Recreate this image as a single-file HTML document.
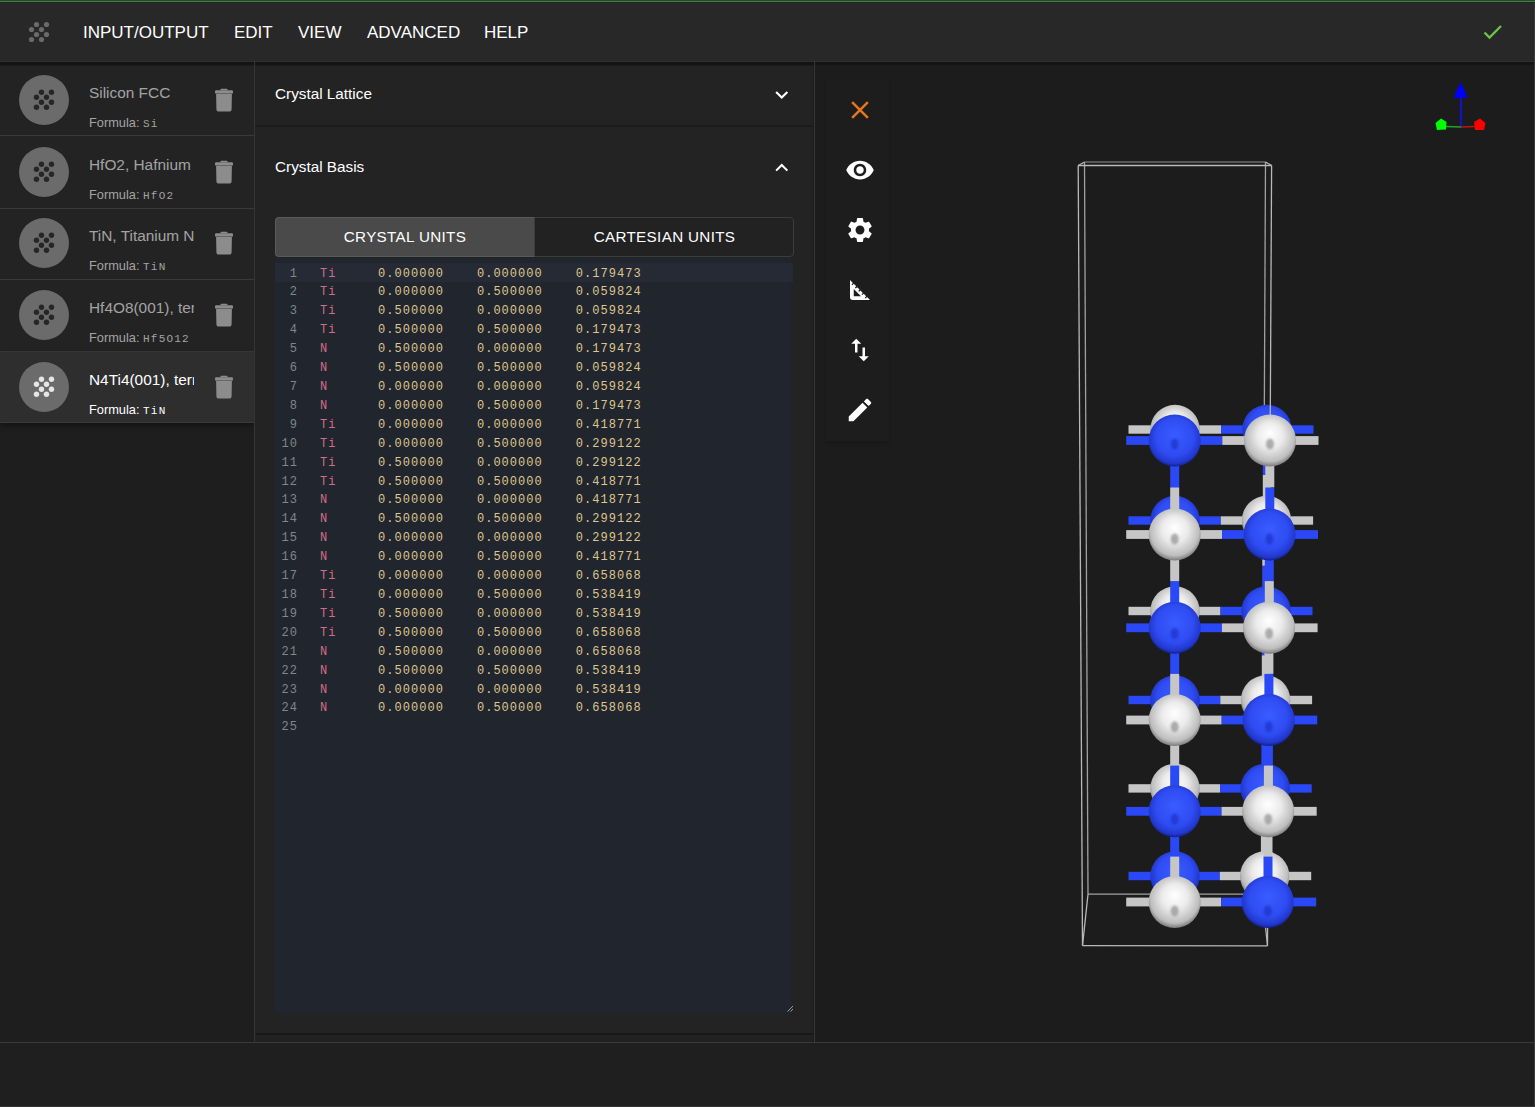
<!DOCTYPE html><html><head><meta charset="utf-8"><style>
*{margin:0;padding:0;box-sizing:border-box}
html,body{width:1535px;height:1107px;overflow:hidden;background:#1c1c1c;font-family:"Liberation Sans",sans-serif;color:#fff}
.a{position:absolute}
.menu{top:23px;font-size:17px;line-height:20px;color:#fff;white-space:nowrap}
.item{left:0;width:254px;height:72px;border-bottom:1px solid #3a3a3a}
.item.sel{background:#2c2c2c}
.av{left:19px;top:11px;width:50px;height:50px;border-radius:50%;background:#6b6b6b}
.ttl{left:89px;width:105px;overflow:hidden;white-space:nowrap;font-size:15.4px;line-height:20px;color:#a3a3a3}
.frm{left:89px;font-size:12.8px;line-height:16px;color:#a3a3a3;white-space:nowrap}
.frm span{font-family:"Liberation Mono",monospace;font-size:11px;letter-spacing:1.2px}
.sel .ttl,.sel .frm{color:#fff}
.acc{font-size:15.3px;line-height:20px;color:#fff;left:20px;white-space:nowrap}
.ed{font-family:"Liberation Mono",monospace;font-size:12px;white-space:pre;letter-spacing:1.04px}
.ln{color:#80868f;text-align:right;width:30px}
.el{color:#d06c88}
.nm{color:#dfc68e}
.tb{font-size:15.2px;line-height:20px;white-space:nowrap;letter-spacing:0.35px}
</style></head><body>
<div class="a" style="left:0;top:0;width:1535px;height:62px;background:#282828"></div>
<div class="a" style="left:0;top:0;width:1535px;height:1px;background:#1b5222"></div>
<div class="a" style="left:0;top:1px;width:1535px;height:1px;background:#4b7552"></div>
<div class="a" style="left:0;top:2px;width:1535px;height:1px;background:#232823"></div>
<svg class="a" style="left:0;top:0" width="80" height="62"><circle cx="36.50" cy="24.50" r="2.6" fill="#6a6a6a"/><circle cx="46.50" cy="24.50" r="2.6" fill="#6a6a6a"/><circle cx="31.50" cy="29.50" r="2.6" fill="#6a6a6a"/><circle cx="41.50" cy="29.50" r="2.6" fill="#6a6a6a"/><circle cx="36.50" cy="34.50" r="2.6" fill="#6a6a6a"/><circle cx="46.50" cy="34.50" r="2.6" fill="#6a6a6a"/><circle cx="31.50" cy="39.50" r="2.6" fill="#6a6a6a"/><circle cx="41.50" cy="39.50" r="2.6" fill="#6a6a6a"/></svg>
<div class="a menu" style="left:83px">INPUT/OUTPUT</div>
<div class="a menu" style="left:234px">EDIT</div>
<div class="a menu" style="left:298px">VIEW</div>
<div class="a menu" style="left:367px">ADVANCED</div>
<div class="a menu" style="left:484px">HELP</div>
<svg class="a" style="left:1480px;top:22px" width="24" height="20" viewBox="0 0 24 20"><path d="M4.5 10.5 L9.5 15.5 L21 4" fill="none" stroke="#6cc04a" stroke-width="2.4"/></svg>
<div class="a" style="left:0;top:62px;width:254px;height:980px;background:#1e1e1e"></div>
<div class="a" style="left:0;top:64px;width:254px;height:358px;background:#232323"></div>
<div class="a" style="left:0;top:135px;width:254px;height:1px;background:#3a3a3a"></div>
<svg class="a" style="left:19px;top:74.8px" width="50" height="50"><circle cx="25" cy="25" r="25" fill="#6b6b6b"/><circle cx="22.50" cy="17.20" r="2.7" fill="#262626"/><circle cx="32.50" cy="17.20" r="2.7" fill="#262626"/><circle cx="17.50" cy="22.20" r="2.7" fill="#262626"/><circle cx="27.50" cy="22.20" r="2.7" fill="#262626"/><circle cx="22.50" cy="27.20" r="2.7" fill="#262626"/><circle cx="32.50" cy="27.20" r="2.7" fill="#262626"/><circle cx="17.50" cy="32.20" r="2.7" fill="#262626"/><circle cx="27.50" cy="32.20" r="2.7" fill="#262626"/></svg>
<div class="a ttl" style="top:83.0px;color:#a3a3a3">Silicon FCC</div>
<div class="a frm" style="top:115.0px;color:#a3a3a3">Formula: <span>Si</span></div>
<svg class="a" style="left:205px;top:79.8px" width="40" height="40" viewBox="205 79.8 40 40"><path d="M220.5 90.0 v-0.7 a0.7 0.7 0 0 1 0.7 -0.7 h5.6 a0.7 0.7 0 0 1 0.7 0.7 v0.7 z" fill="#8c8c8c"/><rect x="215" y="90.0" width="18" height="3.4" rx="1.2" fill="#8c8c8c"/><path d="M216.1 93.5 h15.8 l-0.3 15.2 a2.6 2.6 0 0 1 -2.6 2.6 h-10 a2.6 2.6 0 0 1 -2.6 -2.6 z" fill="#8c8c8c"/></svg>
<div class="a" style="left:0;top:208px;width:254px;height:1px;background:#3a3a3a"></div>
<svg class="a" style="left:19px;top:147.0px" width="50" height="50"><circle cx="25" cy="25" r="25" fill="#6b6b6b"/><circle cx="22.50" cy="17.20" r="2.7" fill="#262626"/><circle cx="32.50" cy="17.20" r="2.7" fill="#262626"/><circle cx="17.50" cy="22.20" r="2.7" fill="#262626"/><circle cx="27.50" cy="22.20" r="2.7" fill="#262626"/><circle cx="22.50" cy="27.20" r="2.7" fill="#262626"/><circle cx="32.50" cy="27.20" r="2.7" fill="#262626"/><circle cx="17.50" cy="32.20" r="2.7" fill="#262626"/><circle cx="27.50" cy="32.20" r="2.7" fill="#262626"/></svg>
<div class="a ttl" style="top:155.2px;color:#a3a3a3">HfO2, Hafnium</div>
<div class="a frm" style="top:187.2px;color:#a3a3a3">Formula: <span>HfO2</span></div>
<svg class="a" style="left:205px;top:152.0px" width="40" height="40" viewBox="205 152.0 40 40"><path d="M220.5 162.2 v-0.7 a0.7 0.7 0 0 1 0.7 -0.7 h5.6 a0.7 0.7 0 0 1 0.7 0.7 v0.7 z" fill="#8c8c8c"/><rect x="215" y="162.2" width="18" height="3.4" rx="1.2" fill="#8c8c8c"/><path d="M216.1 165.7 h15.8 l-0.3 15.2 a2.6 2.6 0 0 1 -2.6 2.6 h-10 a2.6 2.6 0 0 1 -2.6 -2.6 z" fill="#8c8c8c"/></svg>
<div class="a" style="left:0;top:279px;width:254px;height:1px;background:#3a3a3a"></div>
<svg class="a" style="left:19px;top:218.2px" width="50" height="50"><circle cx="25" cy="25" r="25" fill="#6b6b6b"/><circle cx="22.50" cy="17.20" r="2.7" fill="#262626"/><circle cx="32.50" cy="17.20" r="2.7" fill="#262626"/><circle cx="17.50" cy="22.20" r="2.7" fill="#262626"/><circle cx="27.50" cy="22.20" r="2.7" fill="#262626"/><circle cx="22.50" cy="27.20" r="2.7" fill="#262626"/><circle cx="32.50" cy="27.20" r="2.7" fill="#262626"/><circle cx="17.50" cy="32.20" r="2.7" fill="#262626"/><circle cx="27.50" cy="32.20" r="2.7" fill="#262626"/></svg>
<div class="a ttl" style="top:226.4px;color:#a3a3a3">TiN, Titanium Nitride</div>
<div class="a frm" style="top:258.4px;color:#a3a3a3">Formula: <span>TiN</span></div>
<svg class="a" style="left:205px;top:223.2px" width="40" height="40" viewBox="205 223.2 40 40"><path d="M220.5 233.4 v-0.7 a0.7 0.7 0 0 1 0.7 -0.7 h5.6 a0.7 0.7 0 0 1 0.7 0.7 v0.7 z" fill="#8c8c8c"/><rect x="215" y="233.4" width="18" height="3.4" rx="1.2" fill="#8c8c8c"/><path d="M216.1 236.9 h15.8 l-0.3 15.2 a2.6 2.6 0 0 1 -2.6 2.6 h-10 a2.6 2.6 0 0 1 -2.6 -2.6 z" fill="#8c8c8c"/></svg>
<div class="a" style="left:0;top:351px;width:254px;height:1px;background:#3a3a3a"></div>
<svg class="a" style="left:19px;top:289.9px" width="50" height="50"><circle cx="25" cy="25" r="25" fill="#6b6b6b"/><circle cx="22.50" cy="17.20" r="2.7" fill="#262626"/><circle cx="32.50" cy="17.20" r="2.7" fill="#262626"/><circle cx="17.50" cy="22.20" r="2.7" fill="#262626"/><circle cx="27.50" cy="22.20" r="2.7" fill="#262626"/><circle cx="22.50" cy="27.20" r="2.7" fill="#262626"/><circle cx="32.50" cy="27.20" r="2.7" fill="#262626"/><circle cx="17.50" cy="32.20" r="2.7" fill="#262626"/><circle cx="27.50" cy="32.20" r="2.7" fill="#262626"/></svg>
<div class="a ttl" style="top:298.1px;color:#a3a3a3">Hf4O8(001), termination</div>
<div class="a frm" style="top:330.1px;color:#a3a3a3">Formula: <span>Hf5O12</span></div>
<svg class="a" style="left:205px;top:294.9px" width="40" height="40" viewBox="205 294.9 40 40"><path d="M220.5 305.1 v-0.7 a0.7 0.7 0 0 1 0.7 -0.7 h5.6 a0.7 0.7 0 0 1 0.7 0.7 v0.7 z" fill="#8c8c8c"/><rect x="215" y="305.1" width="18" height="3.4" rx="1.2" fill="#8c8c8c"/><path d="M216.1 308.6 h15.8 l-0.3 15.2 a2.6 2.6 0 0 1 -2.6 2.6 h-10 a2.6 2.6 0 0 1 -2.6 -2.6 z" fill="#8c8c8c"/></svg>
<div class="a" style="left:0;top:352px;width:254px;height:70px;background:#2e2e2e;box-shadow:0 3px 6px rgba(0,0,0,0.45)"></div>
<div class="a" style="left:0;top:422px;width:254px;height:1px;background:#3a3a3a"></div>
<svg class="a" style="left:19px;top:362.0px" width="50" height="50"><circle cx="25" cy="25" r="25" fill="#6b6b6b"/><circle cx="22.50" cy="17.20" r="2.7" fill="#e6e6e6"/><circle cx="32.50" cy="17.20" r="2.7" fill="#e6e6e6"/><circle cx="17.50" cy="22.20" r="2.7" fill="#e6e6e6"/><circle cx="27.50" cy="22.20" r="2.7" fill="#e6e6e6"/><circle cx="22.50" cy="27.20" r="2.7" fill="#e6e6e6"/><circle cx="32.50" cy="27.20" r="2.7" fill="#e6e6e6"/><circle cx="17.50" cy="32.20" r="2.7" fill="#e6e6e6"/><circle cx="27.50" cy="32.20" r="2.7" fill="#e6e6e6"/></svg>
<div class="a ttl" style="top:370.2px;color:#ffffff">N4Ti4(001), termination</div>
<div class="a frm" style="top:402.2px;color:#ffffff">Formula: <span>TiN</span></div>
<svg class="a" style="left:205px;top:367.0px" width="40" height="40" viewBox="205 367.0 40 40"><path d="M220.5 377.2 v-0.7 a0.7 0.7 0 0 1 0.7 -0.7 h5.6 a0.7 0.7 0 0 1 0.7 0.7 v0.7 z" fill="#8c8c8c"/><rect x="215" y="377.2" width="18" height="3.4" rx="1.2" fill="#8c8c8c"/><path d="M216.1 380.7 h15.8 l-0.3 15.2 a2.6 2.6 0 0 1 -2.6 2.6 h-10 a2.6 2.6 0 0 1 -2.6 -2.6 z" fill="#8c8c8c"/></svg>
<div class="a" style="left:255px;top:65px;width:558px;height:968px;background:#232323"></div>
<div class="a" style="left:255px;top:1033px;width:558px;height:9px;background:#212121"></div>
<div class="a" style="left:256px;top:1033px;width:557px;height:2px;background:#191919"></div>
<div class="a" style="left:813px;top:62px;width:1px;height:980px;background:#1b1b1b"></div>
<div class="a acc" style="left:275px;top:84px">Crystal Lattice</div>
<div class="a" style="left:255px;top:125px;width:558px;height:2px;background:#1b1b1b"></div>
<div class="a acc" style="left:275px;top:157px">Crystal Basis</div>
<svg class="a" style="left:768.6px;top:81.7px" width="25.5" height="25.5" viewBox="0 0 24 24"><path d="M7.41 8.59L12 13.17l4.59-4.58L18 10l-6 6-6-6 1.41-1.41z" fill="#fff"/></svg>
<svg class="a" style="left:768.6px;top:154.9px" width="25.5" height="25.5" viewBox="0 0 24 24"><path d="M7.41 15.41L12 10.83l4.59 4.58L18 14l-6-6-6 6z" fill="#fff"/></svg>
<div class="a" style="left:275px;top:217px;width:519px;height:40px;border:1px solid #3c3c3c;border-radius:4px;background:#222"></div>
<div class="a" style="left:275px;top:217px;width:260px;height:40px;border:1px solid #5a5a5a;border-right:1px solid #3c3c3c;border-radius:4px 0 0 4px;background:#4a4a4a"></div>
<div class="a tb" style="left:275px;top:227px;width:260px;text-align:center">CRYSTAL UNITS</div>
<div class="a tb" style="left:535px;top:227px;width:259px;text-align:center">CARTESIAN UNITS</div>
<div class="a" style="left:275px;top:258px;width:516px;height:755px;background:#21252d"></div>
<div class="a" style="left:275px;top:263px;width:518px;height:19px;background:#252a34"></div>
<div class="a ed ln" style="left:268px;top:264.50px;line-height:19px">1</div>
<div class="a ed" style="left:320px;top:264.50px;line-height:19px"><span class="el">Ti</span></div>
<div class="a ed nm" style="left:378px;top:264.50px;line-height:19px">0.000000    0.000000    0.179473</div>
<div class="a ed ln" style="left:268px;top:283.41px;line-height:19px">2</div>
<div class="a ed" style="left:320px;top:283.41px;line-height:19px"><span class="el">Ti</span></div>
<div class="a ed nm" style="left:378px;top:283.41px;line-height:19px">0.000000    0.500000    0.059824</div>
<div class="a ed ln" style="left:268px;top:302.32px;line-height:19px">3</div>
<div class="a ed" style="left:320px;top:302.32px;line-height:19px"><span class="el">Ti</span></div>
<div class="a ed nm" style="left:378px;top:302.32px;line-height:19px">0.500000    0.000000    0.059824</div>
<div class="a ed ln" style="left:268px;top:321.23px;line-height:19px">4</div>
<div class="a ed" style="left:320px;top:321.23px;line-height:19px"><span class="el">Ti</span></div>
<div class="a ed nm" style="left:378px;top:321.23px;line-height:19px">0.500000    0.500000    0.179473</div>
<div class="a ed ln" style="left:268px;top:340.14px;line-height:19px">5</div>
<div class="a ed" style="left:320px;top:340.14px;line-height:19px"><span class="el">N</span></div>
<div class="a ed nm" style="left:378px;top:340.14px;line-height:19px">0.500000    0.000000    0.179473</div>
<div class="a ed ln" style="left:268px;top:359.05px;line-height:19px">6</div>
<div class="a ed" style="left:320px;top:359.05px;line-height:19px"><span class="el">N</span></div>
<div class="a ed nm" style="left:378px;top:359.05px;line-height:19px">0.500000    0.500000    0.059824</div>
<div class="a ed ln" style="left:268px;top:377.96px;line-height:19px">7</div>
<div class="a ed" style="left:320px;top:377.96px;line-height:19px"><span class="el">N</span></div>
<div class="a ed nm" style="left:378px;top:377.96px;line-height:19px">0.000000    0.000000    0.059824</div>
<div class="a ed ln" style="left:268px;top:396.87px;line-height:19px">8</div>
<div class="a ed" style="left:320px;top:396.87px;line-height:19px"><span class="el">N</span></div>
<div class="a ed nm" style="left:378px;top:396.87px;line-height:19px">0.000000    0.500000    0.179473</div>
<div class="a ed ln" style="left:268px;top:415.78px;line-height:19px">9</div>
<div class="a ed" style="left:320px;top:415.78px;line-height:19px"><span class="el">Ti</span></div>
<div class="a ed nm" style="left:378px;top:415.78px;line-height:19px">0.000000    0.000000    0.418771</div>
<div class="a ed ln" style="left:268px;top:434.69px;line-height:19px">10</div>
<div class="a ed" style="left:320px;top:434.69px;line-height:19px"><span class="el">Ti</span></div>
<div class="a ed nm" style="left:378px;top:434.69px;line-height:19px">0.000000    0.500000    0.299122</div>
<div class="a ed ln" style="left:268px;top:453.60px;line-height:19px">11</div>
<div class="a ed" style="left:320px;top:453.60px;line-height:19px"><span class="el">Ti</span></div>
<div class="a ed nm" style="left:378px;top:453.60px;line-height:19px">0.500000    0.000000    0.299122</div>
<div class="a ed ln" style="left:268px;top:472.51px;line-height:19px">12</div>
<div class="a ed" style="left:320px;top:472.51px;line-height:19px"><span class="el">Ti</span></div>
<div class="a ed nm" style="left:378px;top:472.51px;line-height:19px">0.500000    0.500000    0.418771</div>
<div class="a ed ln" style="left:268px;top:491.42px;line-height:19px">13</div>
<div class="a ed" style="left:320px;top:491.42px;line-height:19px"><span class="el">N</span></div>
<div class="a ed nm" style="left:378px;top:491.42px;line-height:19px">0.500000    0.000000    0.418771</div>
<div class="a ed ln" style="left:268px;top:510.33px;line-height:19px">14</div>
<div class="a ed" style="left:320px;top:510.33px;line-height:19px"><span class="el">N</span></div>
<div class="a ed nm" style="left:378px;top:510.33px;line-height:19px">0.500000    0.500000    0.299122</div>
<div class="a ed ln" style="left:268px;top:529.24px;line-height:19px">15</div>
<div class="a ed" style="left:320px;top:529.24px;line-height:19px"><span class="el">N</span></div>
<div class="a ed nm" style="left:378px;top:529.24px;line-height:19px">0.000000    0.000000    0.299122</div>
<div class="a ed ln" style="left:268px;top:548.15px;line-height:19px">16</div>
<div class="a ed" style="left:320px;top:548.15px;line-height:19px"><span class="el">N</span></div>
<div class="a ed nm" style="left:378px;top:548.15px;line-height:19px">0.000000    0.500000    0.418771</div>
<div class="a ed ln" style="left:268px;top:567.06px;line-height:19px">17</div>
<div class="a ed" style="left:320px;top:567.06px;line-height:19px"><span class="el">Ti</span></div>
<div class="a ed nm" style="left:378px;top:567.06px;line-height:19px">0.000000    0.000000    0.658068</div>
<div class="a ed ln" style="left:268px;top:585.97px;line-height:19px">18</div>
<div class="a ed" style="left:320px;top:585.97px;line-height:19px"><span class="el">Ti</span></div>
<div class="a ed nm" style="left:378px;top:585.97px;line-height:19px">0.000000    0.500000    0.538419</div>
<div class="a ed ln" style="left:268px;top:604.88px;line-height:19px">19</div>
<div class="a ed" style="left:320px;top:604.88px;line-height:19px"><span class="el">Ti</span></div>
<div class="a ed nm" style="left:378px;top:604.88px;line-height:19px">0.500000    0.000000    0.538419</div>
<div class="a ed ln" style="left:268px;top:623.79px;line-height:19px">20</div>
<div class="a ed" style="left:320px;top:623.79px;line-height:19px"><span class="el">Ti</span></div>
<div class="a ed nm" style="left:378px;top:623.79px;line-height:19px">0.500000    0.500000    0.658068</div>
<div class="a ed ln" style="left:268px;top:642.70px;line-height:19px">21</div>
<div class="a ed" style="left:320px;top:642.70px;line-height:19px"><span class="el">N</span></div>
<div class="a ed nm" style="left:378px;top:642.70px;line-height:19px">0.500000    0.000000    0.658068</div>
<div class="a ed ln" style="left:268px;top:661.61px;line-height:19px">22</div>
<div class="a ed" style="left:320px;top:661.61px;line-height:19px"><span class="el">N</span></div>
<div class="a ed nm" style="left:378px;top:661.61px;line-height:19px">0.500000    0.500000    0.538419</div>
<div class="a ed ln" style="left:268px;top:680.52px;line-height:19px">23</div>
<div class="a ed" style="left:320px;top:680.52px;line-height:19px"><span class="el">N</span></div>
<div class="a ed nm" style="left:378px;top:680.52px;line-height:19px">0.000000    0.000000    0.538419</div>
<div class="a ed ln" style="left:268px;top:699.43px;line-height:19px">24</div>
<div class="a ed" style="left:320px;top:699.43px;line-height:19px"><span class="el">N</span></div>
<div class="a ed nm" style="left:378px;top:699.43px;line-height:19px">0.000000    0.500000    0.658068</div>
<div class="a ed ln" style="left:268px;top:718.34px;line-height:19px">25</div>
<svg class="a" style="left:785px;top:1003px" width="10" height="10"><path d="M2.5 8.5 L8 3 M5.5 8.5 L8 6" stroke="#aaa" stroke-width="0.9"/></svg>
<div class="a" style="left:826px;top:78px;width:63px;height:363px;background:#1d1d1d;box-shadow:0 2px 3px rgba(0,0,0,0.2)"></div>
<svg class="a" style="left:845.0px;top:94.9px" width="30" height="30" viewBox="0 0 24 24"><path d="M19 6.41L17.59 5 12 10.59 6.41 5 5 6.41 10.59 12 5 17.59 6.41 19 12 13.41 17.59 19 19 17.59 13.41 12z" fill="#e8761c"/></svg>
<svg class="a" style="left:844.8px;top:155.1px" width="30" height="30" viewBox="0 0 24 24"><path d="M12 4.5C7 4.5 2.73 7.61 1 12c1.73 4.39 6 7.5 11 7.5s9.27-3.11 11-7.5c-1.73-4.39-6-7.5-11-7.5zM12 17c-2.76 0-5-2.240-5-5s2.24-5 5-5 5 2.24 5 5-2.24 5-5 5zm0-8c-1.66 0-3 1.34-3 3s1.34 3 3 3 3-1.34 3-3-1.34-3-3-3z" fill="#fff"/></svg>
<svg class="a" style="left:845.1px;top:215.2px" width="30" height="30" viewBox="0 0 24 24"><path d="M19.14 12.94c.04-.3.06-.61.06-.94 0-.32-.02-.64-.07-.94l2.03-1.58c.18-.14.23-.41.12-.61l-1.92-3.32c-.12-.22-.37-.29-.59-.22l-2.39.96c-.5-.38-1.03-.7-1.62-.94l-.36-2.540c-.04-.24-.24-.41-.48-.41h-3.84c-.24 0-.43.17-.47.41l-.36 2.54c-.59.24-1.13.57-1.62.94l-2.39-.96c-.22-.08-.47 0-.59.22L2.74 8.87c-.12.21-.08.47.12.61l2.03 1.58c-.05.3-.09.63-.09.94s.02.64.07.94l-2.03 1.58c-.18.14-.23.41-.12.61l1.92 3.32c.12.22.37.29.59.22l2.39-.96c.5.38 1.03.7 1.62.94l.36 2.54c.05.24.24.41.48.41h3.84c.24 0 .44-.17.47-.41l.36-2.54c.59-.24 1.13-.56 1.62-.94l2.39.96c.22.08.47 0 .59-.22l1.92-3.32c.12-.22.07-.47-.12-.61l-2.01-1.58zM12 15.6c-1.98 0-3.6-1.62-3.6-3.6s1.62-3.6 3.6-3.6 3.6 1.62 3.6 3.6-1.62 3.6-3.6 3.6z" fill="#fff"/></svg>
<svg class="a" style="left:844.6px;top:275.0px" width="30" height="30" viewBox="0 0 24 24"><path d="M17.66 17.66l-1.06 1.06-.71-.71 1.06-1.06-1.94-1.94-1.06 1.06-.71-.71 1.06-1.06-1.94-1.94-1.06 1.06-.71-.71 1.06-1.06L9.7 9.7l-1.06 1.06-.71-.71 1.06-1.06-1.94-1.94-1.06 1.06-.71-.71 1.06-1.06L4 4v14c0 1.1.9 2 2 2h14l-2.34-2.34zM7 17v-5.76L12.76 17H7z" fill="#fff"/></svg>
<svg class="a" style="left:844.5px;top:335.0px" width="30" height="30" viewBox="0 0 24 24"><path d="M9 3L5 6.99h3V14h2V6.99h3L9 3zm7 14.01V10h-2v7.01h-3L15 21l4-3.99h-3z" fill="#fff"/></svg>
<svg class="a" style="left:845.0px;top:394.6px" width="30" height="30" viewBox="0 0 24 24"><path d="M3 17.25V21h3.75L17.81 9.94l-3.75-3.75L3 17.25zM20.71 7.04c.39-.39.39-1.02 0-1.41l-2.34-2.34c-.39-.39-1.020-.39-1.41 0l-1.83 1.83 3.75 3.75 1.83-1.83z" fill="#fff"/></svg>
<svg class="a" style="left:1420px;top:70px" width="80" height="70" viewBox="1420 70 80 70"><line x1="1461" y1="127" x2="1461" y2="96" stroke="#1212c0" stroke-width="2.2"/><polygon points="1453.5,97.8 1467.5,97.8 1460.7,82" fill="#0000ff"/><line x1="1446" y1="126.5" x2="1461" y2="127" stroke="#1fa81f" stroke-width="1.6"/><line x1="1461" y1="127" x2="1475" y2="126.5" stroke="#b81818" stroke-width="1.6"/><polygon points="1441,118.5 1446.5,122 1446,129.5 1437,130 1435.5,123" fill="#00ff00"/><polygon points="1480,118.5 1485.5,123 1484,130 1475,130 1474,122" fill="#ff0000"/></svg>
<svg class="a" style="left:815px;top:62px" width="720" height="980" viewBox="815 62 720 980"><defs><radialGradient id="gb" cx="0.5" cy="0.45" r="0.55" fx="0.5" fy="0.4"><stop offset="0" stop-color="#3a5cff"/><stop offset="0.65" stop-color="#2e4cf2"/><stop offset="0.9" stop-color="#2238cc"/><stop offset="1" stop-color="#121f8a"/></radialGradient><radialGradient id="gw" cx="0.5" cy="0.45" r="0.55" fx="0.5" fy="0.36"><stop offset="0" stop-color="#ffffff"/><stop offset="0.45" stop-color="#ebebeb"/><stop offset="0.85" stop-color="#bdbdbd"/><stop offset="1" stop-color="#7a7a7a"/></radialGradient><filter id="bl" x="-1" y="-1" width="3" height="3"><feGaussianBlur stdDeviation="1.2"/></filter></defs><line x1="1084.5" y1="162" x2="1265.5" y2="162" stroke="#b8b8b8" stroke-width="1.3" opacity="0.5"/><line x1="1265.5" y1="162" x2="1262" y2="894.2" stroke="#b8b8b8" stroke-width="1.3" opacity="0.85"/><line x1="1262" y1="894.2" x2="1088" y2="894.2" stroke="#b8b8b8" stroke-width="1.3" opacity="0.85"/><line x1="1088" y1="894.2" x2="1084.5" y2="162" stroke="#b8b8b8" stroke-width="1.3" opacity="0.85"/><line x1="1078.2" y1="165.5" x2="1084.5" y2="162" stroke="#b8b8b8" stroke-width="1.3" opacity="1"/><line x1="1271.6" y1="165.5" x2="1265.5" y2="162" stroke="#b8b8b8" stroke-width="1.3" opacity="1"/><line x1="1082.5" y1="945.6" x2="1088" y2="894.2" stroke="#b8b8b8" stroke-width="1.3" opacity="1"/><line x1="1267.5" y1="945.8" x2="1262" y2="894.2" stroke="#b8b8b8" stroke-width="1.3" opacity="1"/><rect x="1128.5" y="425.3" width="92.5" height="8.4" fill="#c6c6c6"/><rect x="1221.0" y="425.3" width="92.5" height="8.4" fill="#2a48f6"/><rect x="1128.5" y="516.3" width="92.3" height="8.4" fill="#2a48f6"/><rect x="1220.8" y="516.3" width="92.3" height="8.4" fill="#c6c6c6"/><rect x="1128.5" y="606.8" width="92.0" height="8.4" fill="#c6c6c6"/><rect x="1220.5" y="606.8" width="92.0" height="8.4" fill="#2a48f6"/><rect x="1128.5" y="695.8" width="91.8" height="8.4" fill="#2a48f6"/><rect x="1220.3" y="695.8" width="91.8" height="8.4" fill="#c6c6c6"/><rect x="1128.5" y="784.2" width="91.6" height="8.4" fill="#c6c6c6"/><rect x="1220.1" y="784.2" width="91.6" height="8.4" fill="#2a48f6"/><rect x="1128.5" y="871.8" width="91.3" height="8.4" fill="#2a48f6"/><rect x="1219.8" y="871.8" width="91.4" height="8.4" fill="#c6c6c6"/><rect x="1171.0" y="429.5" width="8" height="45.5" fill="#c6c6c6"/><rect x="1171.0" y="475.0" width="8" height="45.5" fill="#2a48f6"/><rect x="1262.8" y="429.5" width="8" height="45.5" fill="#2a48f6"/><rect x="1262.8" y="475.0" width="8" height="45.5" fill="#c6c6c6"/><rect x="1171.0" y="520.5" width="8" height="45.2" fill="#2a48f6"/><rect x="1171.0" y="565.8" width="8" height="45.2" fill="#c6c6c6"/><rect x="1262.3" y="520.5" width="8" height="45.2" fill="#c6c6c6"/><rect x="1262.3" y="565.8" width="8" height="45.2" fill="#2a48f6"/><rect x="1171.0" y="611.0" width="8" height="44.5" fill="#c6c6c6"/><rect x="1171.0" y="655.5" width="8" height="44.5" fill="#2a48f6"/><rect x="1261.8" y="611.0" width="8" height="44.5" fill="#2a48f6"/><rect x="1261.8" y="655.5" width="8" height="44.5" fill="#c6c6c6"/><rect x="1171.0" y="700.0" width="8" height="44.2" fill="#2a48f6"/><rect x="1171.0" y="744.2" width="8" height="44.2" fill="#c6c6c6"/><rect x="1261.4" y="700.0" width="8" height="44.2" fill="#c6c6c6"/><rect x="1261.4" y="744.2" width="8" height="44.2" fill="#2a48f6"/><rect x="1171.0" y="788.4" width="8" height="43.8" fill="#c6c6c6"/><rect x="1171.0" y="832.2" width="8" height="43.8" fill="#2a48f6"/><rect x="1260.9" y="788.4" width="8" height="43.8" fill="#2a48f6"/><rect x="1260.9" y="832.2" width="8" height="43.8" fill="#c6c6c6"/><circle cx="1175.0" cy="429.5" r="24.7" fill="url(#gw)"/><circle cx="1267.0" cy="429.5" r="24.7" fill="url(#gb)"/><circle cx="1175.0" cy="520.5" r="24.7" fill="url(#gb)"/><circle cx="1266.5" cy="520.5" r="24.7" fill="url(#gw)"/><circle cx="1175.0" cy="611.0" r="24.7" fill="url(#gw)"/><circle cx="1266.1" cy="611.0" r="24.7" fill="url(#gb)"/><circle cx="1175.0" cy="700.0" r="24.7" fill="url(#gb)"/><circle cx="1265.6" cy="700.0" r="24.7" fill="url(#gw)"/><circle cx="1175.0" cy="788.4" r="24.7" fill="url(#gw)"/><circle cx="1265.2" cy="788.4" r="24.7" fill="url(#gb)"/><circle cx="1175.0" cy="876.0" r="24.7" fill="url(#gb)"/><circle cx="1264.7" cy="876.0" r="24.7" fill="url(#gw)"/><line x1="1078.2" y1="165.5" x2="1271.6" y2="165.5" stroke="#b8b8b8" stroke-width="1.3" opacity="1"/><line x1="1271.6" y1="165.5" x2="1267.5" y2="945.8" stroke="#b8b8b8" stroke-width="1.3" opacity="1"/><line x1="1267.5" y1="945.8" x2="1082.5" y2="945.6" stroke="#b8b8b8" stroke-width="1.3" opacity="1"/><line x1="1082.5" y1="945.6" x2="1078.2" y2="165.5" stroke="#b8b8b8" stroke-width="1.3" opacity="1"/><rect x="1170.2" y="440.5" width="9" height="47.0" fill="#2a48f6"/><rect x="1170.2" y="487.5" width="9" height="47.0" fill="#c6c6c6"/><rect x="1265.3" y="440.5" width="9" height="47.0" fill="#c6c6c6"/><rect x="1265.3" y="487.5" width="9" height="47.0" fill="#2a48f6"/><rect x="1170.2" y="534.5" width="9" height="46.6" fill="#c6c6c6"/><rect x="1170.2" y="581.1" width="9" height="46.6" fill="#2a48f6"/><rect x="1264.8" y="534.5" width="9" height="46.6" fill="#2a48f6"/><rect x="1264.8" y="581.1" width="9" height="46.6" fill="#c6c6c6"/><rect x="1170.2" y="627.8" width="9" height="46.1" fill="#2a48f6"/><rect x="1170.2" y="673.9" width="9" height="46.1" fill="#c6c6c6"/><rect x="1264.4" y="627.8" width="9" height="46.1" fill="#c6c6c6"/><rect x="1264.4" y="673.9" width="9" height="46.1" fill="#2a48f6"/><rect x="1170.2" y="720.0" width="9" height="45.6" fill="#c6c6c6"/><rect x="1170.2" y="765.6" width="9" height="45.6" fill="#2a48f6"/><rect x="1263.9" y="720.0" width="9" height="45.6" fill="#2a48f6"/><rect x="1263.9" y="765.6" width="9" height="45.6" fill="#c6c6c6"/><rect x="1170.2" y="811.3" width="9" height="45.4" fill="#2a48f6"/><rect x="1170.2" y="856.6" width="9" height="45.4" fill="#c6c6c6"/><rect x="1263.5" y="811.3" width="9" height="45.4" fill="#c6c6c6"/><rect x="1263.5" y="856.6" width="9" height="45.4" fill="#2a48f6"/><rect x="1126.2" y="436.1" width="96.1" height="8.8" fill="#2a48f6"/><rect x="1222.3" y="436.1" width="96.2" height="8.8" fill="#c6c6c6"/><rect x="1126.2" y="530.1" width="95.9" height="8.8" fill="#c6c6c6"/><rect x="1222.1" y="530.1" width="95.9" height="8.8" fill="#2a48f6"/><rect x="1126.2" y="623.4" width="95.7" height="8.8" fill="#2a48f6"/><rect x="1221.9" y="623.4" width="95.7" height="8.8" fill="#c6c6c6"/><rect x="1126.2" y="715.6" width="95.5" height="8.8" fill="#c6c6c6"/><rect x="1221.7" y="715.6" width="95.5" height="8.8" fill="#2a48f6"/><rect x="1126.2" y="806.9" width="95.2" height="8.8" fill="#2a48f6"/><rect x="1221.5" y="806.9" width="95.2" height="8.8" fill="#c6c6c6"/><rect x="1126.2" y="897.6" width="95.0" height="8.8" fill="#c6c6c6"/><rect x="1221.2" y="897.6" width="95.0" height="8.8" fill="#2a48f6"/><circle cx="1174.7" cy="440.5" r="26" fill="url(#gb)"/><ellipse cx="1174.7" cy="444.0" rx="4" ry="5.5" fill="#2238d0" opacity="0.85" filter="url(#bl)"/><circle cx="1270.0" cy="440.5" r="26" fill="url(#gw)"/><ellipse cx="1270.0" cy="444.0" rx="4" ry="5.5" fill="#a0a0a0" opacity="0.85" filter="url(#bl)"/><circle cx="1174.7" cy="534.5" r="26" fill="url(#gw)"/><ellipse cx="1174.7" cy="539.1" rx="4" ry="5.5" fill="#a0a0a0" opacity="0.85" filter="url(#bl)"/><circle cx="1269.5" cy="534.5" r="26" fill="url(#gb)"/><ellipse cx="1269.5" cy="539.1" rx="4" ry="5.5" fill="#2238d0" opacity="0.85" filter="url(#bl)"/><circle cx="1174.7" cy="627.8" r="26" fill="url(#gb)"/><ellipse cx="1174.7" cy="633.5" rx="4" ry="5.5" fill="#2238d0" opacity="0.85" filter="url(#bl)"/><circle cx="1269.1" cy="627.8" r="26" fill="url(#gw)"/><ellipse cx="1269.1" cy="633.5" rx="4" ry="5.5" fill="#a0a0a0" opacity="0.85" filter="url(#bl)"/><circle cx="1174.7" cy="720.0" r="26" fill="url(#gw)"/><ellipse cx="1174.7" cy="726.8" rx="4" ry="5.5" fill="#a0a0a0" opacity="0.85" filter="url(#bl)"/><circle cx="1268.7" cy="720.0" r="26" fill="url(#gb)"/><ellipse cx="1268.7" cy="726.8" rx="4" ry="5.5" fill="#2238d0" opacity="0.85" filter="url(#bl)"/><circle cx="1174.7" cy="811.3" r="26" fill="url(#gb)"/><ellipse cx="1174.7" cy="819.2" rx="4" ry="5.5" fill="#2238d0" opacity="0.85" filter="url(#bl)"/><circle cx="1268.2" cy="811.3" r="26" fill="url(#gw)"/><ellipse cx="1268.2" cy="819.2" rx="4" ry="5.5" fill="#a0a0a0" opacity="0.85" filter="url(#bl)"/><circle cx="1174.7" cy="902.0" r="26" fill="url(#gw)"/><ellipse cx="1174.7" cy="911.0" rx="4" ry="5.5" fill="#a0a0a0" opacity="0.85" filter="url(#bl)"/><circle cx="1267.8" cy="902.0" r="26" fill="url(#gb)"/><ellipse cx="1267.8" cy="911.0" rx="4" ry="5.5" fill="#2238d0" opacity="0.85" filter="url(#bl)"/></svg>
<div class="a" style="left:0;top:61px;width:1535px;height:1px;background:#303030"></div>
<div class="a" style="left:0;top:62px;width:1535px;height:4px;background:linear-gradient(#131313 0%,#151515 60%,#1e1e1e 100%)"></div>
<div class="a" style="left:254px;top:61px;width:1px;height:981px;background:#353535"></div>
<div class="a" style="left:814px;top:61px;width:1px;height:981px;background:#383838"></div>
<div class="a" style="left:0;top:1042px;width:1535px;height:65px;background:#1f1f1f;border-top:1px solid #3a3a3a"></div>
<div class="a" style="left:1534px;top:3px;width:1px;height:1104px;background:#3b3b3b"></div>
<div class="a" style="left:0;top:1106px;width:1535px;height:1px;background:#363636"></div>
</body></html>
